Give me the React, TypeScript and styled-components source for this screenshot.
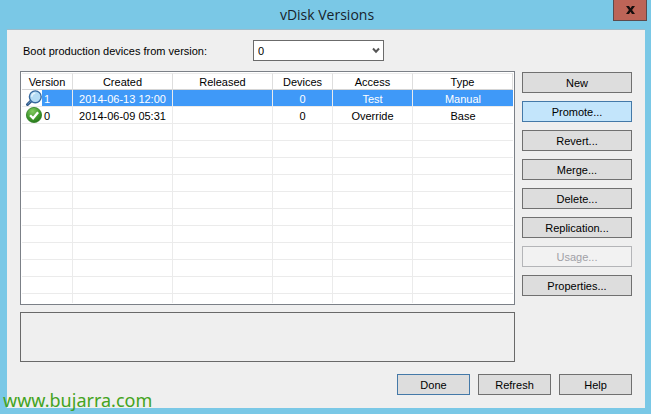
import React from "react";
import styled, { createGlobalStyle, css } from "styled-components";

const GlobalStyle = createGlobalStyle`
  * {
    box-sizing: border-box;
  }
  body {
    margin: 0;
    background: #7ac8e6;
    color: #000;
    font: 11px/14px "Liberation Sans", Arial, sans-serif;
  }
  button, select {
    font: inherit;
    color: inherit;
  }
`;

const Dialog = styled.div`
  position: relative;
  min-height: 100vh;
  display: flex;
  flex-direction: column;
  padding: 0 6px 6px 7px;
  background: #7ac8e6;
`;

const TitleBar = styled.header`
  height: 30px;
  display: grid;
  grid-template-columns: 34px 1fr 34px;
  margin-right: -2px;
`;

const Title = styled.h1`
  grid-column: 2;
  margin: 0;
  text-align: center;
  font: 400 14px/30px "Open Sans", "Noto Sans", sans-serif;
  color: #17232b;
`;

const CloseButton = styled.button`
  height: 21px;
  padding: 0;
  display: grid;
  place-items: center;
  border: 1px solid #5d4a4c;
  border-top: 0;
  background: #bd6457;
`;

const Panel = styled.main`
  flex: 1;
  padding: 10px 13px 13px;
  background: #efefef;
  border-top: 1px solid #9dbccb;
  margin-top: -1px;
`;

const BootRow = styled.div`
  display: flex;
  align-items: center;
  height: 21px;
  margin-bottom: 10px;
`;

const BootLabel = styled.label`
  width: 233px;
  padding-left: 3px;
`;

const SelectWrap = styled.div`
  position: relative;
  width: 131px;
`;

const VersionSelect = styled.select`
  appearance: none;
  display: block;
  width: 100%;
  height: 21px;
  padding: 0 20px 0 4px;
  border: 1px solid #6b6b6b;
  border-radius: 0;
  background: #fff;
`;

const SelectArrow = styled.svg`
  position: absolute;
  right: 4px;
  top: 7px;
  pointer-events: none;
`;

const Columns = styled.div`
  display: grid;
  grid-template-columns: 1fr 110px;
  column-gap: 7px;
  row-gap: 7px;
`;

const ListFrame = styled.div`
  padding: 1px;
  border: 1px solid #7b8087;
  background: #fff;
`;

const VersionTable = styled.table`
  width: 100%;
  table-layout: fixed;
  border-collapse: separate;
  border-spacing: 0;
`;

const HeadCell = styled.th`
  height: 17px;
  padding: 1px 0 0;
  font-weight: 400;
  line-height: 14px;
  text-align: center;
  border-right: 1px solid #dedede;
  border-bottom: 1px solid #d5d5d5;
  border-top: 1px solid #ececec;
`;

const Row = styled.tr<{ $selected?: boolean }>`
  ${(p) =>
    p.$selected &&
    css`
      background: #3f99f8;
      color: #fff;
    `}
`;

const Cell = styled.td<{ $kind?: "mark" | "partial" }>`
  height: ${(p) => (p.$kind === "partial" ? 9 : 17)}px;
  padding: ${(p) => (p.$kind ? 0 : "2px 0 0")};
  line-height: 14px;
  text-align: center;
  white-space: nowrap;
  border-right: 1px solid #ebebeb;
  border-bottom: ${(p) => (p.$kind === "partial" ? "0" : "1px solid #ebebeb")};

  &:last-child {
    border-right: 0;
  }
`;

const VersionMark = styled.div`
  display: flex;
  height: 16px;

  svg {
    flex: none;
    width: 20px;
    padding-left: 4px;
    height: 16px;
    background: #fff;
    overflow: visible;
  }
  span {
    padding: 2px 0 0 2px;
  }
`;

const Actions = styled.div`
  display: flex;
  flex-direction: column;
  gap: 8px;
  padding-top: 1px;
`;

const PushButton = styled.button<{ $tone?: "hot" | "default" }>`
  height: 21px;
  padding: 0;
  text-align: center;
  border: 1px solid ${(p) => (p.$tone ? "#4479a8" : "#707070")};
  background: ${(p) => (p.$tone === "hot" ? "#c3e5fb" : "#dddddd")};

  &:disabled {
    color: #a0a0a6;
    border-color: #b4b5b8;
    background: #f2f2f2;
  }
`;

const Message = styled.output`
  display: block;
  height: 50px;
  border: 1px solid #696969;
`;

const Footer = styled.footer`
  display: grid;
  grid-template-columns: repeat(3, 73px);
  justify-content: end;
  gap: 8px;
  margin-top: 12px;
`;

const SiteLink = styled.a`
  position: absolute;
  left: 3px;
  bottom: 2px;
  font: 400 18px/24px "Noto Sans", "Open Sans", sans-serif;
  color: #43a321;
  text-decoration: none;
`;

const MagnifierIcon = () => (
  <svg viewBox="0 0 16 16" aria-hidden="true">
    <path d="M1.5 14.5 5.5 10.7" stroke="#2d5687" strokeWidth="3" strokeLinecap="round" />
    <path d="M1.8 13.9 5.2 10.7" stroke="#6f9cc8" strokeWidth="1" strokeLinecap="round" />
    <circle cx="9.3" cy="6.8" r="5.9" fill="#b5dcf5" stroke="#36689f" strokeWidth="1.4" />
    <path d="M5.8 6.8a3.6 3.6 0 0 1 3.5-3.6" stroke="#e7f6ff" strokeWidth="1.4" fill="none" />
  </svg>
);

const CheckIcon = () => (
  <svg viewBox="0 0 16 16" aria-hidden="true">
    <defs>
      <radialGradient id="green" cx="40%" cy="25%" r="80%">
        <stop offset="0" stopColor="#83ca61" />
        <stop offset="0.6" stopColor="#40992c" />
        <stop offset="1" stopColor="#247318" />
      </radialGradient>
    </defs>
    <circle cx="8" cy="8" r="7.6" fill="url(#green)" stroke="#2f7d24" strokeWidth="0.8" />
    <path d="m4.1 8.2 3 3.1 5-6.1" fill="none" stroke="#fff" strokeWidth="2.3" />
  </svg>
);

const columns = [
  { name: "Version", width: 51 },
  { name: "Created", width: 100 },
  { name: "Released", width: 100 },
  { name: "Devices", width: 60 },
  { name: "Access", width: 80 },
  { name: "Type", width: 100 },
];

const versions = [
  { id: "1", icon: <MagnifierIcon />, selected: true, cells: ["2014-06-13 12:00", "", "0", "Test", "Manual"] },
  { id: "0", icon: <CheckIcon />, selected: false, cells: ["2014-06-09 05:31", "", "0", "Override", "Base"] },
];

const EMPTY_ROWS = 11;

const actions: { label: string; tone?: "hot"; disabled?: boolean }[] = [
  { label: "New" },
  { label: "Promote...", tone: "hot" },
  { label: "Revert..." },
  { label: "Merge..." },
  { label: "Delete..." },
  { label: "Replication..." },
  { label: "Usage...", disabled: true },
  { label: "Properties..." },
];

export default function App() {
  return (
    <>
      <GlobalStyle />
      <Dialog role="dialog" aria-labelledby="dialog-title">
        <TitleBar>
          <Title id="dialog-title">vDisk Versions</Title>
          <CloseButton type="button" aria-label="Close">
            <svg width="9" height="8" viewBox="0 0 9 8" aria-hidden="true">
              <path d="M0 0h3l1.5 2.2L6 0h3L6.1 4 9 8H6L4.5 5.8 3 8H0l2.9-4z" fill="#160e0d" />
            </svg>
          </CloseButton>
        </TitleBar>
        <Panel>
          <BootRow>
            <BootLabel htmlFor="boot-version">Boot production devices from version:</BootLabel>
            <SelectWrap>
              <VersionSelect id="boot-version" defaultValue="0">
                <option value="0">0</option>
                <option value="1">1</option>
              </VersionSelect>
              <SelectArrow width="8" height="7" viewBox="0 0 8 7" aria-hidden="true">
                <path d="m1 1.5 3 3.2 3-3.2" fill="none" stroke="#555" strokeWidth="2" />
              </SelectArrow>
            </SelectWrap>
          </BootRow>
          <Columns>
            <ListFrame>
              <VersionTable>
                <colgroup>
                  {columns.map((c) => (
                    <col key={c.name} width={c.width} />
                  ))}
                </colgroup>
                <thead>
                  <tr>
                    {columns.map((c) => (
                      <HeadCell key={c.name} scope="col">
                        {c.name}
                      </HeadCell>
                    ))}
                  </tr>
                </thead>
                <tbody>
                  {versions.map((v) => (
                    <Row key={v.id} $selected={v.selected} aria-selected={v.selected}>
                      <Cell $kind="mark">
                        <VersionMark>
                          {v.icon}
                          <span>{v.id}</span>
                        </VersionMark>
                      </Cell>
                      {v.cells.map((text, i) => (
                        <Cell key={i}>{text}</Cell>
                      ))}
                    </Row>
                  ))}
                  {Array.from({ length: EMPTY_ROWS }, (_, r) => (
                    <Row key={r}>
                      {columns.map((c) => (
                        <Cell key={c.name} $kind={r === EMPTY_ROWS - 1 ? "partial" : undefined} />
                      ))}
                    </Row>
                  ))}
                </tbody>
              </VersionTable>
            </ListFrame>
            <Actions>
              {actions.map((a) => (
                <PushButton key={a.label} type="button" $tone={a.tone} disabled={a.disabled}>
                  {a.label}
                </PushButton>
              ))}
            </Actions>
            <Message aria-label="Description" />
          </Columns>
          <Footer>
            <PushButton type="button" $tone="default">
              Done
            </PushButton>
            <PushButton type="button">Refresh</PushButton>
            <PushButton type="button">Help</PushButton>
          </Footer>
        </Panel>
        <SiteLink href="http://www.bujarra.com">www.bujarra.com</SiteLink>
      </Dialog>
    </>
  );
}
